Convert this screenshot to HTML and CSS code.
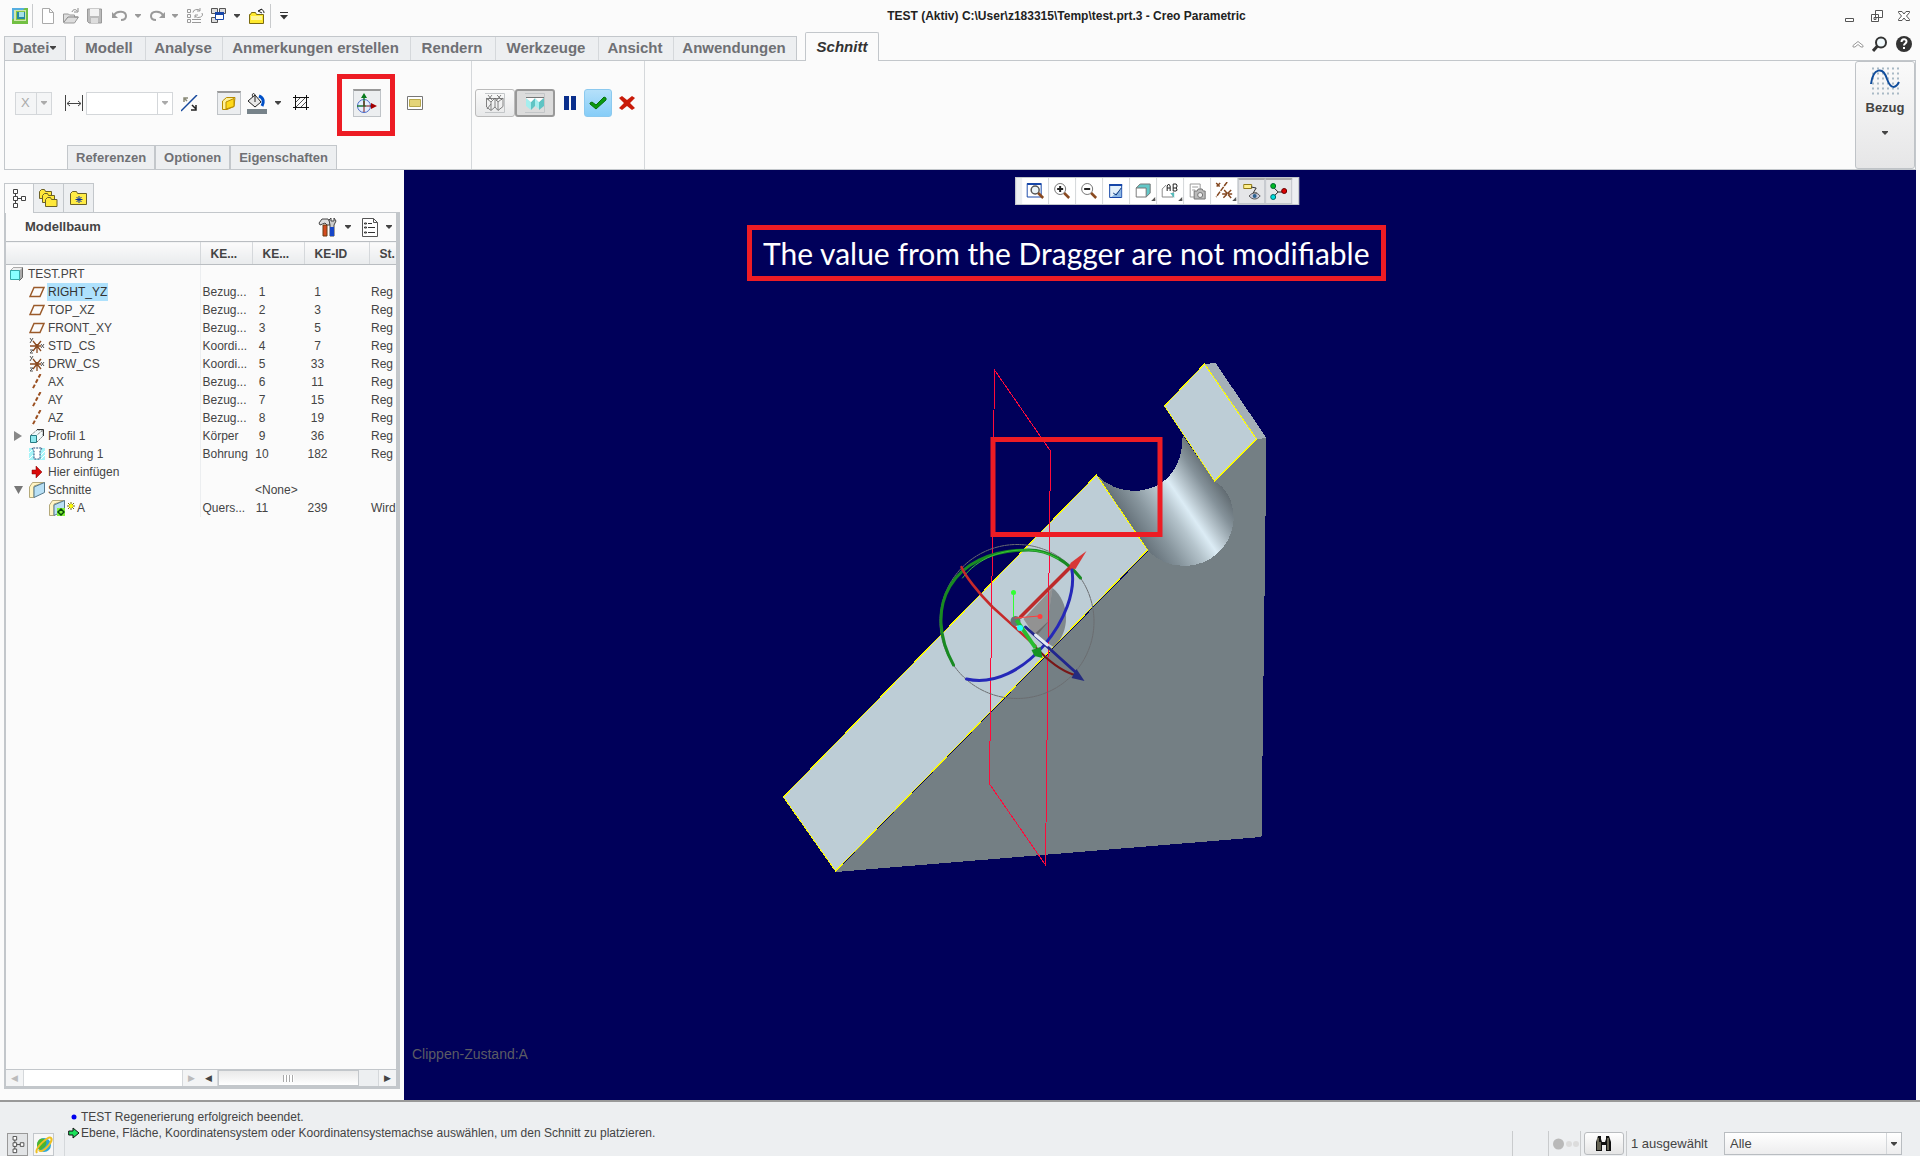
FILE: index.html
```html
<!DOCTYPE html>
<html lang="de">
<head>
<meta charset="utf-8">
<title>TEST (Aktiv) - Creo Parametric</title>
<link rel="stylesheet" href="styles.css">
</head>
<body>
<svg class="defs" aria-hidden="true">
  <symbol id="tri" viewBox="0 0 8 8"><path d="M1 2h6v1L4 6 1 3z" fill="currentColor"/></symbol>
  <symbol id="tree" viewBox="0 0 16 20"><path d="M2.500.5h4v4h-4zM2.500 7.500h4v4h-4zM2.500 14.500h4v4h-4zM10.500 7.500h4v4h-4zM4.500 4.500v3M4.500 11.500v3M6.500 9.500h4" fill="#fff" stroke="currentColor"/></symbol>
  <symbol id="plane" viewBox="0 0 16 16"><path d="M5 3.500h10L11 12.500H1z" fill="none" stroke="#9a5a2a" stroke-width="1.500"/></symbol>
  <symbol id="csys" viewBox="0 0 16 16"><path d="M1 8h11M4 3l8 10M12 3L4 13M8 6v9" stroke="#8a4a20" stroke-width="1.300"/><path d="M1 0l2 3M4 0L1 5M1 12h3l-3 3h3M12 6l3 4M15 6l-3 4" stroke="#555" fill="none"/></symbol>
  <symbol id="axis" viewBox="0 0 16 16"><path d="M11.500 0L3 16" stroke="#9a4f20" stroke-width="2" stroke-dasharray="4 2"/></symbol>
  <symbol id="section" viewBox="0 0 16 16"><path d="M.5 5l3-4.500h12L5 4v11.500H.5z" fill="#fff4c4" stroke="#b4a97a"/><path d="M5 5L15.500.5v10L5 15.500z" fill="#b9e0f5" stroke="#55798c"/></symbol>
  <linearGradient id="bore" gradientUnits="userSpaceOnUse" x1="1147" y1="550" x2="1228" y2="495">
    <stop offset="0" stop-color="#66727a"/><stop offset=".2" stop-color="#87959d"/><stop offset=".42" stop-color="#b5c4cc"/><stop offset=".57" stop-color="#dcecf5"/><stop offset=".67" stop-color="#bccad2"/><stop offset=".84" stop-color="#85929a"/><stop offset="1" stop-color="#616b71"/>
  </linearGradient>
  <pattern id="mesh" width="2" height="2" patternUnits="userSpaceOnUse"><path d="M0 0h1v1H0zM1 1h1v1H1z" fill="#444"/></pattern>
</svg>

<header class="titlebar">
  <div class="quick">
    <svg width="16" height="16"><path d="M0 0h16v16H0z" fill="#72c043"/><path d="M0 0h13L0 12z" fill="#55aee0"/><path d="M2 2h12v11H2z" fill="#cfe6b0"/><path d="M4 3h9v9H4z" fill="#8cc63f"/><path d="M5 4h8v7H5z" fill="#2689a0"/><path d="M7 4h5v5H7z" fill="#a6e1e5"/></svg>
    <i class="vsep"></i>
    <button aria-label="Neu"><svg width="14" height="16"><path d="M1.500.5h7l4 4v11h-11zM8.500.5v4h4" fill="#fff" stroke="#aaa"/></svg></button>
    <button aria-label="Öffnen"><svg width="17" height="16"><path d="M.5 14V6h5l1 1h5v2h4l-4 6H1z" fill="#ddd" stroke="#999"/><path d="M1 14l4-5h10M9 4c1-3 4-3 5-1m1-3v4h-4" fill="none" stroke="#888"/></svg></button>
    <button aria-label="Speichern"><svg width="16" height="16"><path d="M.5 1h14v14H2l-1.500-1.500z" fill="#bbb" stroke="#999"/><path d="M3 1h9v7H3z" fill="#f2f2f2"/><path d="M4 10h7v5H4z" fill="#ddd"/></svg></button>
    <button aria-label="Rückgängig"><svg width="16" height="16"><path d="M2 7c3-5 12-4 12 1 0 3-2 4-5 4" fill="none" stroke="#9a9a9a" stroke-width="2"/><path d="M0 4v6h6z" fill="#9a9a9a"/></svg></button>
    <svg class="dim" width="8" height="8"><use href="#tri"/></svg>
    <button aria-label="Wiederholen"><svg width="16" height="16"><path d="M14 7C11 2 2 3 2 8c0 3 2 4 5 4" fill="none" stroke="#9a9a9a" stroke-width="2"/><path d="M16 4v6h-6z" fill="#9a9a9a"/></svg></button>
    <svg class="dim" width="8" height="8"><use href="#tri"/></svg>
    <button aria-label="Regenerieren"><svg width="16" height="16"><path d="M.5 1.500h3v3h-3zM.5 6.500h3v3h-3zM.5 11.500h3v3h-3zM5 11.500h9M5 14.500h9M6 4.500a4 3 0 0 1 7-2M15 5a4 3 0 0 1-7 3M13 0v3h-3M8 10V7h3" fill="none" stroke="#999"/></svg></button>
    <button aria-label="Fenster"><svg width="16" height="16"><path d="M.5.5h6v5h-6zM8.500.5h6v5h-6zM.5 9.500h6v5h-6z" fill="#ddd" stroke="#555"/><path d="M4.500 4.500h8v7h-8z" fill="#fff" stroke="#1646a8"/><path d="M4 4h9v3H4z" fill="#1646a8"/></svg></button>
    <svg width="8" height="8"><use href="#tri"/></svg>
    <button aria-label="Schließen"><svg width="17" height="17"><path d="M.5 15.500v-9h1l1-2h4l1 2h7v9z" fill="#ffe92e" stroke="#7b6b10"/><path d="M2 8h11v4H2z" fill="#fff799"/><path d="M10 3c2-3 5-1 5 2M13 1l-4 2 4 2" fill="none" stroke="#222"/></svg></button>
    <i class="vsep"></i>
    <svg width="10" height="10"><path d="M1 1.500h8" stroke="#333"/><path d="M1 4h8L5 8.500z" fill="#333"/></svg>
  </div>
  <h1>TEST (Aktiv) C:\User\z183315\Temp\test.prt.3 - Creo Parametric</h1>
  <div class="winbtns">
    <button aria-label="Minimieren"><svg width="12" height="12"><path d="M1.500 8.500h8v3h-8z" fill="#fff" stroke="#555"/></svg></button>
    <button aria-label="Wiederherstellen"><svg width="12" height="12"><path d="M4.500.5h7v7h-7zM.5 4.500h7v7h-7zM3 7.500h2v2H3z" fill="#fff" stroke="#555"/></svg></button>
    <button aria-label="Fenster schließen"><svg width="12" height="12"><path d="M.5 1.500h3.500L6 4l2-2.500h3.500v1L8.500 6l3 3.500v1H8L6 8l-2 2.500H.5v-1l3-3.500-3-3.500z" fill="#fff" stroke="#555"/></svg></button>
  </div>
</header>

<nav class="tabs">
  <button class="file">Datei<svg width="8" height="8"><use href="#tri"/></svg></button>
  <div class="tabset">
    <button>Modell</button><button>Analyse</button><button>Anmerkungen erstellen</button><button>Rendern</button><button>Werkzeuge</button><button>Ansicht</button><button>Anwendungen</button>
  </div>
  <button class="active">Schnitt</button>
  <div class="help">
    <button aria-label="Einklappen"><svg width="12" height="8"><path d="M1 5.500l5-4 5 4v1.500H9L6 4.500 3 7H1z" fill="#fff" stroke="#999"/></svg></button>
    <button aria-label="Suchen"><svg width="16" height="16"><circle cx="9" cy="6.500" r="5" fill="#f2fafd" stroke="#333" stroke-width="2"/><path d="M5.500 10L1 15" stroke="#333" stroke-width="3"/></svg></button>
    <button aria-label="Hilfe"><svg width="16" height="16"><circle cx="8" cy="8" r="8" fill="#333"/><path d="M5.500 6c0-3.500 5-3.500 5-.5 0 2-2.500 2-2.500 4M8 11v2" stroke="#fff" stroke-width="2" fill="none"/></svg></button>
  </div>
</nav>

<section class="ribbon">
  <div class="dash">
    <div class="controls">
      <span class="combo small"><select aria-label="Achse" disabled><option>X</option></select><svg width="8" height="8"><use href="#tri"/></svg></span>
      <svg width="19" height="18"><path d="M.5 1v16M17.500 1v16M2 9.500h14M5 7L2 9.500 5 12M13 7l3 2.500-3 2.500" fill="none" stroke="#444"/></svg>
      <span class="combo"><input aria-label="Abstand" type="text" disabled><svg width="8" height="8"><use href="#tri"/></svg></span>
      <button aria-label="Umkehren"><svg width="17" height="17"><path d="M0 16L16 0" stroke="#14479b" stroke-width="1.500"/><path d="M3 3l3 3M3 7V3h4" stroke="#8a8a78" fill="none" stroke-width="1.500"/><path d="M11 10l4 4M15 10v5h-5" stroke="#222" fill="none" stroke-width="1.500"/></svg></button>
      <button class="pressed" aria-label="Kappe"><svg width="16" height="16"><path d="M1.500 5l4-3.500h8.500l-1 9-7 3H1.500z" fill="#fff199" stroke="#b88b00"/><path d="M5 6l8-3.500v8L5 13z" fill="#ffd91a" stroke="#b88b00"/></svg></button>
      <button aria-label="Füllfarbe"><svg width="21" height="21"><path d="M12 3c5 2 5 6 3 10" fill="none" stroke="#0050c8" stroke-width="3"/><path d="M1 8l7-6 6 7-6 5z" fill="#e8e8e8" stroke="#222"/><path d="M8 9V2C7-1 4 1 6 4" fill="none" stroke="#222"/><path d="M0 16h20v5H0z" fill="#77838a"/></svg></button>
      <svg width="8" height="8"><use href="#tri"/></svg>
      <button aria-label="Schraffur"><svg width="16" height="16"><path d="M0 2.500h16M0 12.500h16M2.500 0v15M13.500 0v15" stroke="#111"/><path d="M3 7l4-4M3 12l9-9M8 12l5-5" stroke="#555"/></svg></button>
      <div class="mark"><button class="pressed large" aria-label="Dragger"><svg width="22" height="22"><circle cx="8" cy="13" r="6.500" fill="#e5efff" stroke="#4768c8"/><path d="M8 13V4M1 13h9" stroke="#207838" stroke-width="1.500"/><path d="M8 0l3 5H5z" fill="#087a1c"/><path d="M8 8v11M10 13h5" stroke="#7c1515"/><path d="M15 10l6 3-6 3z" fill="#a40000"/></svg></button></div>
      <button aria-label="2D-Ansicht"><svg width="16" height="14"><path d="M.5.5h15v13H.5z" fill="#fff" stroke="#777"/><path d="M2.500 3.500h11v7h-11z" fill="#e4d478" stroke="#b7a74b"/></svg></button>
    </div>
    <div class="panels"><button>Referenzen</button><button>Optionen</button><button>Eigenschaften</button></div>
  </div>
  <div class="confirm">
    <button class="box" aria-label="Kein Schnitt"><svg width="20" height="20"><path d="M0 .5h19.500v19H0" fill="none" stroke="#c3c6c8"/><path d="M1.500 5.500h16M1 5l5 4 4-4 3 4 5-4M6 9v8M13 9v8M1.500 6v8l4.500 3.500 4-3.500V6M10 14l3 3.500 5-4V5M3 2l4 5M7 2L3 7M12 2l5 5M16 2l-5 6M2 16l4-5" fill="none" stroke="#666" stroke-width=".8"/></svg></button>
    <button class="box on" aria-label="Schnittvorschau"><svg width="20" height="20"><path d="M0 .5h19.500v19H0" fill="none" stroke="#c3c6c8"/><path d="M1 5l5 4v8l-5-4zM10 5l4 4v7l-4-3z" fill="#a5eeee"/><path d="M6 9l4-4v8l-4 4zM14 9l5-4v8l-5 4z" fill="#5fc4c4"/><path d="M1 4h18l-5 5-4-4-4 4-5-4z" fill="#fff"/><path d="M1 4.500h18" stroke="#777"/></svg></button>
    <button class="plain" aria-label="Pause"><svg width="12" height="14"><path d="M0 0h5v14H0zM7 0h5v14H7z" fill="#0a2f8c"/></svg></button>
    <button class="ok" aria-label="OK"><svg width="18" height="14"><path d="M1 7l2-1 4 3 8-8 2 1v2L7 13 1 8z" fill="#0a9a10" stroke="#067009"/></svg></button>
    <button class="plain" aria-label="Abbrechen"><svg width="16" height="14"><path d="M0 2l3-2 5 4 5-4 3 2-5 5 5 5-3 2-5-4-5 4-3-2 5-5z" fill="#c91a08"/></svg></button>
  </div>
  <button class="datum"><svg width="30" height="30"><path d="M2 2.500h28M2 7.500h28M2 12.500h28M2 17.500h28M2 22.500h28M2 27.500h28" stroke="#a9bac6" stroke-width="2" stroke-dasharray="2 3"/><path d="M1 18C3 2 13 0 17 13c4 11 9 9 12 3" fill="none" stroke="#104d9c" stroke-width="2"/></svg><span>Bezug</span><svg width="8" height="8"><use href="#tri"/></svg></button>
</section>

<main>
  <aside>
    <div class="treetabs">
      <button class="sel" aria-label="Modellbaum"><svg width="16" height="20"><use href="#tree"/></svg></button>
      <button aria-label="Ordner"><svg width="19" height="19"><g fill="#ffe83a" stroke="#6c6126"><path d="M.5 9.500v-7l2-2h3l1 2h6v7z"/><path d="M3.500 13.500v-7l2-2h3l1 2h6v7z"/><path d="M6.500 17.500v-7l2-2h3l1 2h5.500v7z"/></g></svg></button>
      <button aria-label="Favoriten"><svg width="18" height="16"><path d="M.5 14.500v-11l2-2h4l1 2h9v11z" fill="#ffec45" stroke="#6c6126"/><path d="M9 6v7M5.500 9.500h7M6.500 7l5 5M11.500 7l-5 5" stroke="#0a2fa5"/></svg></button>
    </div>
    <div class="treepanel">
      <div class="treehead">
        <h2>Modellbaum</h2>
        <button aria-label="Einstellungen"><svg width="20" height="20"><path d="M1 6l3-4h6l2 3v3H9L7 6 2 8z" fill="#ddd" stroke="#444"/><path d="M5 8h4v11H5z" fill="#d44a1e" stroke="#6b3a10"/><path d="M12 8l-1-5 2-2v3h3V1l2 3-2 4v11h-4z" fill="#ccc" stroke="#444"/><path d="M12 10h4v9h-4z" fill="#1646c8"/></svg></button>
        <svg width="8" height="8"><use href="#tri"/></svg>
        <button aria-label="Anzeigen"><svg width="17" height="19"><path d="M.5.500h11l4 4v14H.5zM11.500.5v4h4" fill="#fff" stroke="#555"/><path d="M6 5.500h4M6 9.500h7M6 14.500h7M2.500 5h2v1h-2zM2.500 9h2v1h-2zM2.500 14h2v1h-2z" stroke="#333" fill="none"/></svg></button>
        <svg width="8" height="8"><use href="#tri"/></svg>
      </div>
      <div class="treebody">
      <table>
        <colgroup><col class="c1"><col class="c2"><col class="c2"><col class="c3"><col></colgroup>
        <thead><tr><th></th><th>KE...</th><th>KE...</th><th>KE-ID</th><th>St.</th></tr></thead>
        <tbody>
          <tr><td><div class="n root"><svg width="14" height="14"><path d="M.5 3.500l3-3h9v10l-3 3z" fill="#aaa" stroke="#666"/><path d="M1 3l2.500-2.500h9L10 3z" fill="#eee"/><path d="M.5 3.500h9v9h-9z" fill="#8ff" stroke="#3aa"/></svg>TEST.PRT</div></td><td></td><td></td><td></td><td></td></tr>
          <tr><td><div class="n"><svg width="16" height="16"><use href="#plane"/></svg><mark>RIGHT_YZ</mark></div></td><td>Bezug...</td><td>1</td><td>1</td><td>Reg</td></tr>
          <tr><td><div class="n"><svg width="16" height="16"><use href="#plane"/></svg>TOP_XZ</div></td><td>Bezug...</td><td>2</td><td>3</td><td>Reg</td></tr>
          <tr><td><div class="n"><svg width="16" height="16"><use href="#plane"/></svg>FRONT_XY</div></td><td>Bezug...</td><td>3</td><td>5</td><td>Reg</td></tr>
          <tr><td><div class="n"><svg width="16" height="16"><use href="#csys"/></svg>STD_CS</div></td><td>Koordi...</td><td>4</td><td>7</td><td>Reg</td></tr>
          <tr><td><div class="n"><svg width="16" height="16"><use href="#csys"/></svg>DRW_CS</div></td><td>Koordi...</td><td>5</td><td>33</td><td>Reg</td></tr>
          <tr><td><div class="n"><svg width="16" height="16"><use href="#axis"/></svg>AX</div></td><td>Bezug...</td><td>6</td><td>11</td><td>Reg</td></tr>
          <tr><td><div class="n"><svg width="16" height="16"><use href="#axis"/></svg>AY</div></td><td>Bezug...</td><td>7</td><td>15</td><td>Reg</td></tr>
          <tr><td><div class="n"><svg width="16" height="16"><use href="#axis"/></svg>AZ</div></td><td>Bezug...</td><td>8</td><td>19</td><td>Reg</td></tr>
          <tr><td><div class="n exp"><svg width="8" height="10"><path d="M0 0l8 5-8 5z" fill="#888"/></svg><svg width="16" height="16"><path d="M2 7l6-5h6l-6 5M8 14l6-6V2" fill="#eef8fa" stroke="#777" stroke-dasharray="2 1"/><path d="M1.500 7.500h6v7h-6z" fill="#8ee8ee" stroke="#287a83"/><path d="M8 1.500h6.500V8" stroke="#333" fill="none"/></svg>Profil 1</div></td><td>Körper</td><td>9</td><td>36</td><td>Reg</td></tr>
          <tr><td><div class="n"><svg width="16" height="14"><path d="M0 1h16v12H0z" fill="#a6f4f8"/><path d="M3 1l2 3v8h6V4l2-3z" fill="#fff" stroke="#234a7a" stroke-dasharray="2 1"/><path d="M0 6l3-3M0 12l4-4M12 8l4-4M12 12l4-4" stroke="#fff"/></svg>Bohrung 1</div></td><td>Bohrung</td><td>10</td><td>182</td><td>Reg</td></tr>
          <tr><td><div class="n"><svg width="16" height="12"><path d="M3 4h4V0l6 6-6 6V8H3z" fill="#d90a0a" stroke="#7a0000" stroke-width=".5"/></svg>Hier einfügen</div></td><td></td><td></td><td></td><td></td></tr>
          <tr><td><div class="n exp"><svg width="10" height="8"><path d="M0 0h9L4.500 8z" fill="#777"/></svg><svg width="16" height="16"><use href="#section"/></svg>Schnitte</div></td><td></td><td class="none">&lt;None&gt;</td><td></td><td></td></tr>
          <tr><td><div class="n sub"><svg width="16" height="16"><use href="#section"/><path d="M8 8h8v8H8z" fill="#83ef3d"/><path d="M12 9l3 3-3 3-3-3z" fill="none" stroke="#064d06" stroke-width="1.500"/></svg><svg width="8" height="14"><path d="M4 1v8M0 5h8M1 2l6 6M7 2L1 8" stroke="#7a7200"/><circle cx="4" cy="5" r="2" fill="#ff0"/></svg>A</div></td><td>Quers...</td><td>11</td><td>239</td><td>Wird</td></tr>
        </tbody>
      </table>
      </div>
      <div class="scrolls">
        <div class="sb off"><i>◀</i><b></b><i>▶</i></div>
        <div class="sb"><i>◀</i><b><span></span></b><i>▶</i></div>
      </div>
    </div>
  </aside>

  <section class="view">
    <svg class="scene" viewBox="404 170 1511 930" preserveAspectRatio="xMidYMid meet">
      <g shape-rendering="crispEdges">
        <path d="M835 872L1148 551 1184 510 1214 481 1256 438h10L1261 837z" fill="#747f84"/>
        <path d="M1096 475c14 14 32 18 47 15 24-4 40-25 39-55l32 46c14 8 20 24 19 40-2 26-24 45-49 45-16 0-29-7-37-16z" fill="url(#bore)"/>
        <path d="M1204 364l11-1 51 75-10 1z" fill="#a4b0b8"/>
        <g fill="#bdcdd6" stroke="#ff0" stroke-width="1">
          <path d="M783 797L1096 475l51 75L835 871z"/>
          <path d="M1204 364l-40 42 50 75 42-42z"/>
        </g>
      </g>
      <path d="M1023 619l29-31-5 35-12 14z" fill="#929292"/>
      <path d="M1052 588c18 14 18 45 1 59l-19-13 13-12z" fill="url(#mesh)"/>
      <path d="M994 370l56 81-5 414-56-81z" fill="none" stroke="#ff0a3a" shape-rendering="crispEdges"/>
      <g fill="none" stroke-linecap="round">
        <circle cx="1016.500" cy="621.500" r="77" stroke="#6b6d70" stroke-dasharray="4 1"/>
        <path d="M953 665c-31-56-4-115 75-115 22 0 40 13 52 28" stroke="#188a22" stroke-width="3"/>
        <path d="M962 578c15-20 40-29 66-28 15 1 22 5 30 9" stroke="#38c438" stroke-width="1"/>
        <path d="M1071 568c10 46-49 124-105 111" stroke="#2528b8" stroke-width="3"/>
        <path d="M961 567c3 8 16 25 31 40l43 39" stroke="#c62a2a" stroke-width="2.500"/>
        <path d="M1035 647c10 11 23 23 39 28" stroke="#781717" stroke-width="2"/>
        <path d="M1025 627l51 46" stroke="#22268d" stroke-width="3"/>
        <path d="M1035 635l12 10" stroke="#e4eaf4" stroke-width="3"/>
        <path d="M1020 617l52-52" stroke="#bd2b2b" stroke-width="3.500"/>
      </g>
      <path d="M1070 563l16-12-11 18-6-1z" fill="#d73636"/>
      <path d="M1071 678l5-9 8 12z" fill="#252b80"/>
      <circle cx="1015" cy="621" r="5" fill="#687276"/>
      <path d="M1016 620l19 28" stroke="#28bd30" stroke-width="4"/>
      <path d="M1031 650l9-3 2 11-8-2z" fill="#169324"/>
      <path d="M1013 617v-24" stroke="#3f3"/><circle cx="1013" cy="592.500" r="2.500" fill="#3f3"/>
      <path d="M1014 618l25-2" stroke="#ff3d3d"/><circle cx="1039.500" cy="616.500" r="2.500" fill="#ff3d3d"/>
      <circle cx="1019.500" cy="628" r="3" fill="#25ffff"/>
      <path d="M992.500 439.500h167v95h-167z" fill="none" stroke="#ed1c24" stroke-width="5"/>
    </svg>
    <div class="gtools">
      <button aria-label="Einpassen"><svg width="18" height="18"><path d="M1 1.500h14V15H1z" fill="#fff" stroke="#1646a8"/><path d="M1 1h14v2H1z" fill="#1646a8"/><circle cx="9" cy="8" r="4" fill="#eaf4f8" stroke="#555" stroke-width="1.500"/><path d="M12 11l5 5" stroke="#8a4a20" stroke-width="2.500"/></svg></button>
      <button aria-label="Vergrößern"><svg width="18" height="18"><circle cx="7" cy="7" r="5.500" fill="#fff" stroke="#777"/><path d="M4 7h6M7 4v6" stroke="#222" stroke-width="2"/><path d="M11 11l5 5" stroke="#8a4a20" stroke-width="2.500"/></svg></button>
      <button aria-label="Verkleinern"><svg width="18" height="18"><circle cx="7" cy="7" r="5.500" fill="#fff" stroke="#777"/><path d="M4 7h6" stroke="#222" stroke-width="2"/><path d="M11 11l5 5" stroke="#8a4a20" stroke-width="2.500"/></svg></button>
      <button aria-label="Neu zeichnen"><svg width="16" height="16"><path d="M1.500 1.500h12v13h-12z" fill="#e4f1fb" stroke="#1646a8"/><path d="M1 1h13v2H1z" fill="#1646a8"/><path d="M3 14L13 6v8z" fill="#8bb6e4"/><path d="M5 10l3 2 5-7" fill="none" stroke="#123a7c"/></svg></button>
      <button class="more" aria-label="Darstellungsstil"><svg width="16" height="16"><path d="M1 5l4-4h10v9l-4 4z" fill="#63c8c8" stroke="#777"/><path d="M1 5h10v9H1z" fill="#fff" stroke="#777"/></svg></button>
      <button class="more" aria-label="Gespeicherte Ansichten"><svg width="18" height="16"><path d="M1 6l4-4M1 6v8h11V9" fill="none" stroke="#888"/><path d="M9 10h4v5z" fill="#55bcbc"/><path d="M6 8V3l1.500-2L9 3v5M6 5h3M12 1v7h3l1-1-1-2h-3M12 1h3l1 2-1 2" fill="none" stroke="#222"/></svg></button>
      <button aria-label="Ansichtsmanager"><svg width="17" height="17"><path d="M1 1h10v13H1zM3 4h6M3 7h3" fill="#fff" stroke="#999"/><path d="M5 8h3l1-2h4l1 2h2v8H5z" fill="#bbb" stroke="#777"/><circle cx="11" cy="12" r="2.500" fill="#eee" stroke="#777"/></svg></button>
      <button class="more" aria-label="Bezugsanzeige"><svg width="18" height="18"><path d="M1 1l4 4M5 1L1 5M12 0L1 15M7 12h10M9 8l7 8M16 8l-8 8" stroke="#844820" stroke-width="1.500" stroke-dasharray="5 1"/></svg></button>
      <button class="on" aria-label="Anmerkungen"><svg width="18" height="18"><path d="M.5 1.500h8v4h-8z" fill="#fff08c" stroke="#907a16"/><path d="M8 4l5 1-3 5h4" fill="none" stroke="#333"/><path d="M6 13c3-4 8-4 11 0-3 4-8 4-11 0z" fill="#ccd" stroke="#555"/><circle cx="11.500" cy="13" r="2" fill="#2b608d"/></svg></button>
      <button class="on" aria-label="Rotationszentrum"><svg width="18" height="18"><path d="M3 4l5 5-5 5M8 9h6" fill="none" stroke="#222"/><circle cx="3" cy="3" r="2.500" fill="#0b2" stroke="#063"/><circle cx="14" cy="8" r="2.500" fill="#d00" stroke="#600"/><circle cx="3" cy="14" r="2.500" fill="#0dd" stroke="#066"/></svg></button>
    </div>
    <p class="callout">The value from the Dragger are not modifiable</p>
    <p class="clip">Clippen-Zustand:A</p>
  </section>
</main>

<footer>
  <div class="fbtns">
    <button class="on" aria-label="Navigator"><svg width="16" height="18"><use href="#tree"/></svg></button>
    <button aria-label="Browser"><svg width="18" height="18"><circle cx="9" cy="9" r="7" fill="#2ca6d8"/><path d="M5 3c4-2 8 2 6 6s-5 3-5 6C2 13 0 7 5 3z" fill="#4cb52f"/><path d="M2 17C-1 13 13-1 16 2s-9 17-12 12" fill="none" stroke="#edc024" stroke-width="2"/></svg></button>
  </div>
  <ul>
    <li><svg width="12" height="12"><circle cx="6" cy="6" r="2.500" fill="#00e"/></svg>TEST Regenerierung erfolgreich beendet.</li>
    <li><svg width="12" height="12"><path d="M.7 4H5V1l6 5-6 5V8H.7z" fill="#1be05b" stroke="#111"/></svg>Ebene, Fläche, Koordinatensystem oder Koordinatensystemachse auswählen, um den Schnitt zu platzieren.</li>
  </ul>
  <div class="fright">
    <span class="cell blank"></span>
    <span class="cell lamps"><svg width="26" height="12"><circle cx="5.500" cy="6" r="5.500" fill="#b9b9b9"/><circle cx="16" cy="6" r="3" fill="#dcdcdc"/><circle cx="23" cy="6" r="3" fill="#dcdcdc"/></svg></span>
    <span class="cell find"><button aria-label="Suchen"><svg width="18" height="16"><path d="M2 3l1-3h3v3l1 3h3l1-3V0h3l1 3 1 3v9h-5V9H7v6H1V6z" fill="#111"/><path d="M3 2v12M5 6v8M13 2v12" stroke="#b9b596"/></svg></button></span>
    <span class="cell count">1 ausgewählt</span>
    <span class="combo filter"><select aria-label="Filter"><option>Alle</option></select><svg width="8" height="8"><use href="#tri"/></svg></span>
  </div>
</footer>
</body>
</html>
```

FILE: styles.css
```css
* { box-sizing: border-box; }

body {
  margin: 0;
  height: 100vh;
  display: flex;
  flex-direction: column;
  overflow: hidden;
  background: #fbfbfb;
  color: #444;
  font: 12px/16px "Liberation Sans", Arial, sans-serif;
}

button {
  display: flex;
  align-items: center;
  justify-content: center;
  padding: 0;
  border: 0;
  background: none;
  color: inherit;
  font: inherit;
}

svg { display: block; flex: none; color: #444; }
.defs { position: absolute; width: 0; height: 0; }
h1, h2, p, ul { margin: 0; padding: 0; }

/* title bar */
.titlebar { display: flex; align-items: center; height: 32px; padding: 0 10px 0 12px; }
.quick {
  display: grid;
  grid-template-columns: 20px 9px 22px 24px 25px 22px 15px 22px 16px 24px 22px 16px 21px 9px 10px;
  align-items: center;
  justify-items: start;
}
.vsep { width: 1px; height: 24px; background: #c9cbcd; }
.dim { color: #999; }
h1 { flex: 1; text-align: center; color: #222; font-size: 12px; line-height: 16px; }
.winbtns { display: flex; gap: 15px; }

/* ribbon tabs */
.tabs { display: flex; align-items: flex-end; height: 28px; padding: 0 8px 0 4px; font-size: 15px; font-weight: bold; color: #6f7074; }
.file, .tabset { height: 24px; border: 1px solid #c3c7cb; border-bottom: 0; background: #edeff1; }
.file { width: 62px; margin-right: 8px; padding-bottom: 2px; }
.tabset { display: grid; grid-template-columns: 70px 77px 188px 85px 103px 75px 123px; }
.tabset button { padding: 0 2px 2px 0; }
.tabset button + button { border-left: 1px solid #d5d8db; }
.active {
  position: relative;
  z-index: 1;
  width: 74px;
  height: 29px;
  margin: 0 0 -1px 8px;
  border: 1px solid #c3c7cb;
  border-bottom: 0;
  border-radius: 2px 2px 0 0;
  background: #fbfbfb;
  color: #333;
  font-style: italic;
}
.help { display: flex; align-items: center; gap: 8px; margin: 0 0 8px auto; }

/* ribbon */
.ribbon { display: flex; height: 110px; margin: 0 4px; border: 1px solid #c3c7cb; }
.dash { display: flex; flex-direction: column; justify-content: space-between; width: 467px; border-right: 1px solid #d5d8db; }
.controls {
  display: grid;
  grid-template-columns: 50px 21px 95px 36px 30px 27px 19px 44px 70px 16px;
  align-items: center;
  justify-items: start;
  height: 84px;
  padding-left: 10px;
}
.combo { display: flex; align-items: center; width: 87px; height: 23px; padding-right: 3px; border: 1px solid #d4d7da; background: #fff; }
.combo svg { color: #aaa; }
.combo select, .combo input {
  flex: 1;
  min-width: 0;
  height: 100%;
  margin-right: 3px;
  padding: 0 5px;
  border: 0;
  border-right: 1px solid #d4d7da;
  appearance: none;
  background: none;
  color: #444;
  font: inherit;
}
.combo.small { width: 37px; background: #f4f5f6; font-size: 13px; }
.combo.small select { color: #aaa; opacity: 1; }
.pressed { width: 24px; height: 24px; border: 1px solid #bfc3c7; border-top: 2px solid #999; background: #eceef0; }
.pressed.large { width: 28px; height: 28px; }
.mark { margin-top: 4px; padding: 10px 9px 14px 11px; border: 5px solid #ed1c24; }
.panels { display: flex; padding-left: 62px; font-size: 13px; font-weight: bold; color: #6f7074; }
.panels button { height: 24px; padding: 0 8px; border: 1px solid #c3c7cb; border-bottom: 0; background: #edeff1; }
.confirm { display: flex; align-items: center; width: 173px; padding: 0 0 24px 3px; border-right: 1px solid #d5d8db; }
.box { width: 40px; height: 28px; border: 1px solid #bbb; border-radius: 3px; background: linear-gradient(#fbfbfb, #e7e8e9); }
.box.on { border: 2px solid #999; background: #dcdcdc; }
.plain { width: 29px; height: 28px; }
.ok { width: 28px; height: 28px; border: 1px solid #8bc9ef; border-radius: 3px; background: linear-gradient(#b5e0fa, #86cdf8); }
.datum {
  flex-direction: column;
  justify-content: flex-start;
  width: 60px;
  margin-left: auto;
  padding-top: 4px;
  border: 1px solid #bfc3c7;
  border-radius: 3px;
  background: linear-gradient(#fafafa, #e6e6e7);
  font-size: 13px;
  font-weight: bold;
}
.datum span { margin: 4px 0 13px; }

/* work area */
main { flex: 1; min-height: 0; display: flex; padding-right: 4px; }
aside { display: flex; flex-direction: column; flex: none; width: 404px; padding: 13px 4px 11px; }
.treetabs { display: flex; height: 29px; }
.treetabs button { width: 30px; border: 1px solid #c3c7cb; border-width: 1px 1px 0 0; background: #edeff1; }
.treetabs .sel { position: relative; z-index: 1; height: 30px; border-left-width: 1px; background: #fbfbfb; }
.treepanel { flex: 1; min-height: 0; display: flex; flex-direction: column; border: 1px solid #c3c7cb; border-width: 1px 4px 3px 2px; }
.treehead { display: flex; align-items: center; height: 28px; padding: 0 3px 0 19px; }
.treehead h2 { flex: 1; font-size: 13px; line-height: 16px; }
.treehead svg { margin-right: 6px; }
.treehead > svg:nth-of-type(1) { margin-right: 10px; }
.treehead > svg:last-child { margin: 0; }
.treebody { flex: 1; min-height: 0; overflow: hidden; }
table { width: 100%; table-layout: fixed; border-collapse: collapse; }
.c1 { width: 194px; }
.c2 { width: 52px; }
.c3 { width: 65px; }
th { height: 23px; padding: 2px 0 0 10px; border: 1px solid #b9bdc1; border-width: 1px 0; background: linear-gradient(#fbfbfb, #e9ebed); text-align: left; overflow: hidden; white-space: nowrap; }
th + th { border-left: 1px solid #d5d8db; }
td { height: 18px; padding: 0 0 0 2px; overflow: hidden; white-space: nowrap; }
td:nth-child(1) { padding: 0; border-right: 1px solid #eceef0; }
td:nth-child(3) { padding: 0 32px 0 0; text-align: center; }
td:nth-child(4) { padding: 0 38px 0 0; text-align: center; }
td.none { padding: 0 0 0 3px; text-align: left; }
.n { display: flex; align-items: center; gap: 3px; height: 18px; padding-left: 23px; }
.n.root { gap: 4px; padding-left: 4px; }
.n.exp { padding-left: 8px; }
.n.exp svg:first-child { width: 12px; }
.n.sub { gap: 2px; padding-left: 43px; }
mark { margin-left: -1px; padding: 1px; background: #aee1fc; color: #333; }
.scrolls { display: grid; grid-template-columns: 194px 1fr; height: 17px; border-top: 1px solid #c3c7cb; }
.sb { display: flex; color: #444; }
.sb i { width: 17px; background: #f3f4f5; font: 9px/16px "DejaVu Sans", sans-serif; text-align: center; }
.sb b { flex: 1; border: 1px solid #d5d8db; border-width: 0 1px; background: #edeff1; }
.sb span { display: block; width: 88%; height: 16px; border: 1px solid #c3c7cb; background: repeating-linear-gradient(90deg, #aaa 0 1px, #fff 1px 3px) center / 11px 7px no-repeat, linear-gradient(#e9e9e9, #fff); }
.sb.off { color: #bbb; }
.sb.off b { background: #fff; }

/* graphics window */
.view { position: relative; flex: 1; min-width: 0; background: #00005a; }
.scene { width: 100%; height: 100%; }
.gtools { position: absolute; top: 7px; left: 50%; display: flex; padding: 0 6px; border: 1px solid #c3c7cb; background: #edeff1; transform: translateX(-51%); }
.gtools button { position: relative; width: 27px; height: 26px; border-right: 1px solid #d0d3d6; background: #fff; }
.gtools .on { border: 1px solid #c3c7cb; border-top: 2px solid #aaa; background: #e5e6e8; }
.gtools .more::after { content: ""; position: absolute; right: 1px; bottom: 3px; border: 2px solid #555; border-top-color: transparent; border-left-color: transparent; }
.callout { position: absolute; top: 55px; left: 343px; padding: 5px 11px; border: 5px solid #ed1c24; color: #fff; font: 30px/36px Lato, Carlito, sans-serif; white-space: nowrap; }
.clip { position: absolute; left: 8px; bottom: 38px; color: #5c5c64; font-size: 14px; }

/* status bar */
footer { display: flex; align-items: flex-end; height: 56px; border-top: 2px solid #999; background: #edeff1; }
.fbtns { display: flex; gap: 5px; width: 65px; height: 23px; padding-left: 7px; border-right: 1px solid #d5d8db; }
.fbtns button { width: 21px; border: 1px solid #c3c7cb; background: #f7f7f7; }
.fbtns .on { border-color: #999; background: #e2e4e6; color: #26364d; }
ul { flex: 1; align-self: flex-start; padding: 7px 0 0 3px; list-style: none; }
li { display: flex; align-items: center; gap: 1px; height: 16px; }
.fright { display: flex; align-items: center; height: 25px; padding-right: 18px; font-size: 13px; }
.cell { display: flex; align-items: center; height: 25px; border-left: 1px solid #c9cbcd; }
.blank { width: 36px; }
.lamps { width: 32px; padding-left: 4px; }
.find { width: 46px; padding-left: 3px; }
.find button { width: 40px; height: 23px; border: 1px solid #b9bcbf; border-radius: 3px; background: linear-gradient(#fff, #e5e5e5); }
.count { width: 98px; padding-left: 4px; }
.filter { width: 178px; border-color: #b9bdc1; background: linear-gradient(#fff, #ededee); }
.filter svg { color: #444; }
```
